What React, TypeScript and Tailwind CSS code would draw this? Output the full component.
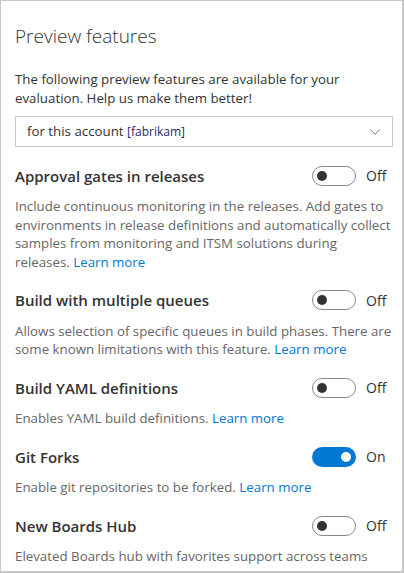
import type { ReactNode } from "react";
import { ChevronDown } from "lucide-react";

type Feature = {
  title: string;
  description: ReactNode;
  on: boolean;
  link?: boolean;
};

const features: Feature[] = [
  {
    title: "Approval gates in releases",
    description: (
      <>
        Include continuous monitoring in the releases. Add gates to environments in release
        definitions and automatically collect samples from monitoring and ITSM solutions during
        <br />
        releases.
      </>
    ),
    on: false,
    link: true,
  },
  {
    title: "Build with multiple queues",
    description:
      "Allows selection of specific queues in build phases. There are some known limitations with this feature.",
    on: false,
    link: true,
  },
  {
    title: "Build YAML definitions",
    description: "Enables YAML build definitions.",
    on: false,
    link: true,
  },
  {
    title: "Git Forks",
    description: "Enable git repositories to be forked.",
    on: true,
    link: true,
  },
  {
    title: "New Boards Hub",
    description: "Elevated Boards hub with favorites support across teams",
    on: false,
  },
];

function Toggle({ on }: { on: boolean }) {
  return (
    <div className="flex w-[81px] items-center gap-[10px]">
      {on ? (
        <div className="flex h-[20px] w-[44px] items-center justify-end rounded-full bg-[#0078d4] px-[5px]">
          <div className="h-[10px] w-[10px] rounded-full bg-white" />
        </div>
      ) : (
        <div className="flex h-[20px] w-[44px] items-center rounded-full border border-[#8a8886] px-[4px]">
          <div className="h-[10px] w-[10px] rounded-full bg-[#333333]" />
        </div>
      )}
      <span className="text-[14px] text-[#333333]">{on ? "On" : "Off"}</span>
    </div>
  );
}

export default function App() {
  return (
    <div
      className="h-[573px] w-[404px] overflow-hidden border-t border-l border-r-2 border-b-2 border-[#c8c8c8] bg-white text-[#333333]"
      style={{ fontFamily: '"Open Sans", "Noto Sans", sans-serif' }}
    >
      <div className="px-[14px] pr-[9px] pt-[22px]">
        <h1 className="text-[19px] font-light leading-[26px] text-[#333333]">
          Preview features
        </h1>
        <p className="mt-[21px] text-[13.3px] leading-[19px]">
          The following preview features are available for your evaluation. Help us make them better!
        </p>
        <div className="mt-[8px] flex h-[31px] items-center justify-between border border-[#c8c8c8] pl-[11px] pr-[8px]">
          <span className="text-[13.3px]">
            for this account{" "}
            <span className="text-[12px] text-[#1f1f6e]">[fabrikam]</span>
          </span>
          <ChevronDown className="h-[18px] w-[18px] text-[#666666]" strokeWidth={1.2} />
        </div>

        <div className="mt-[18px] flex flex-col gap-[18.5px]">
          {features.map((f) => (
            <div key={f.title}>
              <div className="flex items-center justify-between">
                <span className="text-[15px] font-semibold leading-[20px]">{f.title}</span>
                <Toggle on={f.on} />
              </div>
              <p className="mt-[11px] text-[13.3px] leading-[18.5px] text-[#666666]">
                {f.description}
                {f.link && (
                  <>
                    {" "}
                    <a className="text-[#0078d4]">Learn more</a>
                  </>
                )}
              </p>
            </div>
          ))}
        </div>
      </div>
    </div>
  );
}
